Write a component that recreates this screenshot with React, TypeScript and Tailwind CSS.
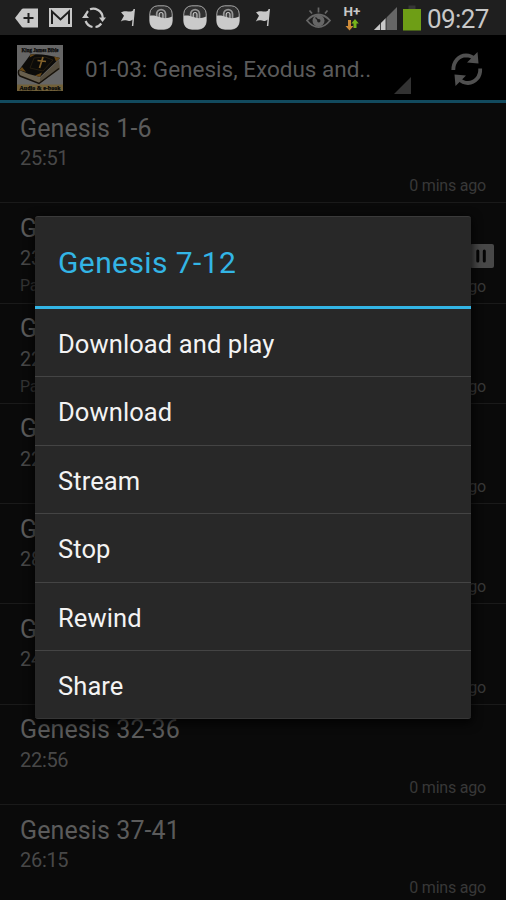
import React from "react";

const rows = [
  { title: "Genesis 1-6", time: "25:51", note: "", playing: false },
  { title: "Genesis 7-12", time: "23:08", note: "Paused", playing: true },
  { title: "Genesis 13-18", time: "22:31", note: "Paused", playing: false },
  { title: "Genesis 19-23", time: "22:17", note: "", playing: false },
  { title: "Genesis 24-27", time: "28:12", note: "", playing: false },
  { title: "Genesis 28-31", time: "24:40", note: "", playing: false },
  { title: "Genesis 32-36", time: "22:56", note: "", playing: false },
  { title: "Genesis 37-41", time: "26:15", note: "", playing: false },
];

const actions = ["Download and play", "Download", "Stream", "Stop", "Rewind", "Share"];

function Flag({ className }: { className: string }) {
  return (
    <svg className={className} width="16" height="20" viewBox="0 0 16 20">
      <path d="M14.200 1 12.600 18" stroke="#c8c8c8" strokeWidth="1.500" fill="none" />
      <path d="M14.400 1C12.500 4.500 9 3.500 6.500 3.300 4.500 3.100 2.500 3.600 1 4.300L4 7.800.8 13.600c2-1.500 4.200-1.800 6.200-1 2 .8 4.400.2 6.200-1.400z" fill="#c8c8c8" />
    </svg>
  );
}

function Lock({ className }: { className: string }) {
  return (
    <svg className={className} width="24" height="25" viewBox="0 0 24 25">
      <rect x=".8" y=".8" width="22.400" height="23.400" rx="8" fill="#303030" stroke="#a8a8a8" strokeWidth="1" />
      <path d="M7.700 12V9a4.400 4.400 0 0 1 8.800 0v5" fill="none" stroke="#959595" strokeWidth="1.800" />
      <path d="M10.200 13V9.400a1.900 1.900 0 0 1 3.800 0V14z" fill="#444" stroke="#c4c4c4" strokeWidth="1.200" />
      <path d="M.8 10.800c3-.8 6-.3 9.500 1.200s8 1.800 12.900-.5V16c0 5-3 8.200-8 8.200H9c-5 0-8.200-3-8.200-8z" fill="#cacaca" />
    </svg>
  );
}

function StatusBar() {
  return (
    <div className="flex h-[35px] items-center bg-[#1f1f1f]">
      <svg className="ml-[15px]" width="23" height="20" viewBox="0 0 23 20">
        <path d="M0 10 6.500 1.500Q7.200.6 8.400.6H23v18.800H8.400q-1.200 0-1.900-.9z" fill="#c8c8c8" />
        <path d="M13.500 5v10M8.500 10h10" stroke="#1f1f1f" strokeWidth="2" />
      </svg>
      <svg className="ml-[11px]" width="23" height="19" viewBox="0 0 23 19">
        <rect width="23" height="19" fill="#c8c8c8" />
        <path d="M3 16V3.500l8.500 8L20 3.500V16" fill="none" stroke="#1f1f1f" strokeWidth="2" />
      </svg>
      <svg className="ml-[10px]" width="24" height="22" viewBox="0 0 24 22">
        <path d="M8 2.300Q12 .8 16 3Q20.500 5.500 20.800 11M3.200 11Q3.300 7 6 4M3.600 14Q5.500 19 10.500 20M13.500 20Q17 19.700 19.300 16.500" fill="none" stroke="#c8c8c8" strokeWidth="2.200" />
        <path d="M17 10.500h7L20.500 15zM0 11h7L3.300 6.500z" fill="#c8c8c8" />
      </svg>
      <Flag className="ml-[14px]" />
      <Lock className="ml-[13px]" />
      <Lock className="ml-[10px]" />
      <Lock className="ml-[9px]" />
      <Flag className="ml-[15px]" />
      <svg className="ml-[35px]" width="25" height="22" viewBox="0 0 25 22">
        <path d="M1 13.500Q6.500 7.500 12.500 7.500T24 13.500Q18.500 20.200 12.500 20.200T1 13.500z" fill="none" stroke="#666" strokeWidth="1.800" />
        <circle cx="12.500" cy="13.700" r="6" fill="#666" />
        <path d="m9.500 10.500 3 3" stroke="#1f1f1f" strokeWidth="1.300" />
        <circle cx="12.800" cy="13.800" r="1.700" fill="#1f1f1f" />
        <path d="M12.500 .5v5M3.500 3.500l2.500 3M21.500 3.500l-2.500 3" stroke="#666" strokeWidth="1.700" />
      </svg>
      <div className="ml-[12px] flex w-[18px] flex-col items-center">
        <span className="text-[13.500px] leading-[12px] font-bold text-[#c8c8c8]">H+</span>
        <svg className="mt-[2px]" width="14" height="12" viewBox="0 0 14 12">
          <path d="M3 1h3v6h2.500l-4 4.500L.5 7H3z" fill="#cf8b38" />
          <path d="M8.500 9V4.500H6.300L10 0l3.800 4.500h-2.300V9z" fill="#76b51b" />
        </svg>
      </div>
      <svg className="mt-[2px] ml-[13px]" width="23" height="23" viewBox="0 0 23 23">
        <path d="M23 0v23H0z" fill="#666" />
        <path d="M0 23 12 11v12z" fill="#c8c8c8" />
        <path d="M6.500 16v7M12 10v13" stroke="#1f1f1f" strokeWidth=".8" />
      </svg>
      <svg className="ml-[6px]" width="18" height="26" viewBox="0 0 18 26">
        <rect x="5.500" y="0.500" width="7" height="4" fill="#363636" />
        <rect y="4" width="18" height="21.500" fill="#6e9e16" />
      </svg>
      <span className="mt-[3px] ml-[6px] text-[26px] leading-[35px] tracking-[-0.6px] whitespace-nowrap text-[#c8c8c8]">09:27</span>
    </div>
  );
}

function BookCover() {
  return (
    <svg className="ml-[17px]" width="46" height="46" viewBox="0 0 46 46">
      <rect width="46" height="46" fill="#666" />
      <rect y="39.500" width="46" height="6.500" fill="#72613a" />
      <path d="m2 25 1 6 19 7 20-14v-9L23 33z" fill="#685f4d" />
      <path d="m23 33 19-18 1 9-20 14z" fill="#544c3d" />
      <path d="M13.500 9.500Q26 8 43 13L23 32Q12 30 2 25z" fill="#0c0b09" />
      <path d="M2 25q-1.500 4 1 6l19 7.500 20-15" fill="none" stroke="#17120b" strokeWidth="1.500" />
      <path d="m17 13 11-1 8 3-10 11-13-3z" fill="none" stroke="#302511" strokeWidth=".7" />
      <path d="m26 12-3.500 11M20.500 15.500l8.500 1" stroke="#80602a" strokeWidth="1.700" />
      <path d="m13.500 9.500 5 0-6 3zM43 13l-6-1.500 2 5zM2 25l3-3 4 5zM23 32l-5-1.500 7-3z" fill="#664716" />
      <text x="23" y="6.800" textAnchor="middle" textLength="37" lengthAdjust="spacingAndGlyphs" fontFamily="Liberation Serif, serif" fontWeight="bold" fontSize="6.500" stroke="#050505" strokeWidth=".25" fill="#050505">King James Bible</text>
      <text x="23" y="44.700" textAnchor="middle" textLength="41" lengthAdjust="spacingAndGlyphs" fontFamily="Liberation Serif, serif" fontWeight="bold" fontSize="6.800" stroke="#050505" strokeWidth=".25" fill="#050505">Audio &amp; e-book</text>
    </svg>
  );
}

function ActionBar() {
  return (
    <div className="flex h-[68px] items-center border-b-[3px] border-[#124a5e] bg-black">
      <BookCover />
      <span className="mt-[5px] ml-[22px] w-[309px] text-[22.500px] whitespace-nowrap text-[#5b5b5b]">01-03: Genesis, Exodus and..</span>
      <svg className="mt-[36px]" width="17" height="17" viewBox="0 0 17 17">
        <path d="M17 0v17H0z" fill="#323232" />
      </svg>
      <svg className="mt-[3px] ml-[40px]" width="32" height="34" viewBox="0 0 32 34">
        <path d="M2.300 18C2.300 9.500 8 3.500 15 3.300c4 0 6.500 1.300 9 4M29.200 16.500C29.700 25 24 30.800 17 31c-4 0-6.500-1.300-9-4" fill="none" stroke="#505050" strokeWidth="3.800" />
        <path d="m26.500 0 1 11.500-11.500-1zM4.500 34l-1-11.500L15 23.500z" fill="#505050" />
      </svg>
    </div>
  );
}

export default function App() {
  return (
    <div className="relative h-[900px] w-[506px] overflow-hidden bg-[#0a0a0a] font-[Roboto,sans-serif]">
      <StatusBar />
      <ActionBar />
      <div>
        {rows.map((row) => (
          <div key={row.title} className="flex h-[100.3px] justify-between border-b border-[#1a1a1a] pr-[20px] pl-[20px]">
            <div className="flex flex-col whitespace-nowrap">
              <span className="mt-[9.500px] text-[25px] leading-[32px] tracking-[0.1px] text-[#5b5b5b]">{row.title}</span>
              <span className="mt-[1.500px] text-[20px] leading-[24px] tracking-[-0.3px] text-[#484848]">{row.time}</span>
              <span className="mt-[6px] text-[16px] leading-[20px] tracking-[-0.2px] text-[#333333]">{row.note}</span>
            </div>
            <div className="flex flex-col items-end justify-end pb-[6px]">
              {row.playing && (
                <svg className="-mr-[8px] mb-[9px]" width="24" height="24" viewBox="0 0 24 24">
                  <rect width="24" height="24" rx="2" fill="#484848" />
                  <path d="M7.800 7v10M14.300 7v10" stroke="#050505" strokeWidth="3" strokeLinecap="round" />
                </svg>
              )}
              <span className="text-[16px] leading-[20px] tracking-[-0.2px] text-[#383838]">0 mins ago</span>
            </div>
          </div>
        ))}
      </div>
      <div className="absolute top-[216px] left-[35px] w-[436px] rounded-[3px] border-t border-b border-t-[#3a3a3a] border-b-[#363636] bg-[#282828] shadow-[0_3px_10px_2px_rgba(0,0,0,0.7)]">
        <div className="flex h-[92px] items-center border-b-[3px] border-[#33b5e5] pt-[2px] pl-[23px] text-[30px] tracking-[0.4px] whitespace-nowrap text-[#33b5e5]">Genesis 7-12</div>
        {actions.map((action) => (
          <div key={action} className="flex h-[68.4px] items-center border-b border-[#444444] pt-[3px] pl-[23px] text-[25.500px] tracking-[0.1px] whitespace-nowrap text-[#f3f3f3] last:h-[67px] last:border-b-0">
            {action}
          </div>
        ))}
      </div>
    </div>
  );
}
